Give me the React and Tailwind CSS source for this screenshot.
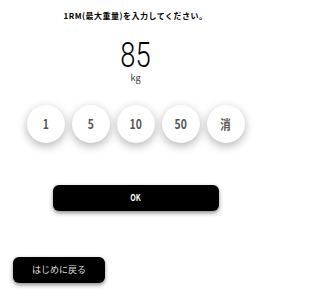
import React from "react";

const keys = ["1", "5", "10", "50", "消"];

export default function App() {
  return (
    <div className="w-[271px] h-[300px] bg-white flex flex-col font-['Noto_Sans_CJK_JP',sans-serif] text-black">
      <p className="mt-[11px] h-[10px] text-center text-[8px] leading-[10px] font-bold tracking-[0.5px]">
        1RM(最大重量)を入力してください。
      </p>
      <div className="mt-[17px] h-[35px] flex justify-center">
        <span className="inline-block text-[35px] leading-[35px] font-light font-['Roboto',sans-serif] scale-x-[0.78]">85</span>
      </div>
      <div className="h-[10px] text-center text-[9px] leading-[10px] text-[#333]">kg</div>
      <div className="mt-[22px] flex justify-center gap-[7px] pl-[1px]">
        {keys.map((k) => (
          <div
            key={k}
            className="w-[38px] h-[38px] rounded-full bg-white shadow-[0_3px_10px_rgba(0,0,0,0.3)] flex items-center justify-center text-[13px] font-bold text-[#555]"
          >
            <span className="inline-block scale-x-[0.8]">{k}</span>
          </div>
        ))}
      </div>
      <button className="mt-[42px] self-center ml-[1px] w-[166px] h-[26px] rounded-[6px] bg-black shadow-[0_2px_4px_rgba(0,0,0,0.45)] flex items-center justify-center text-white text-[9px] font-bold">
        <span className="inline-block scale-x-[0.8]">OK</span>
      </button>
      <button className="mt-[46px] ml-[13px] w-[92px] h-[26px] rounded-[6px] bg-black shadow-[0_2px_4px_rgba(0,0,0,0.45)] flex items-center justify-center text-[#ddd] text-[9px]">
        はじめに戻る
      </button>
    </div>
  );
}
